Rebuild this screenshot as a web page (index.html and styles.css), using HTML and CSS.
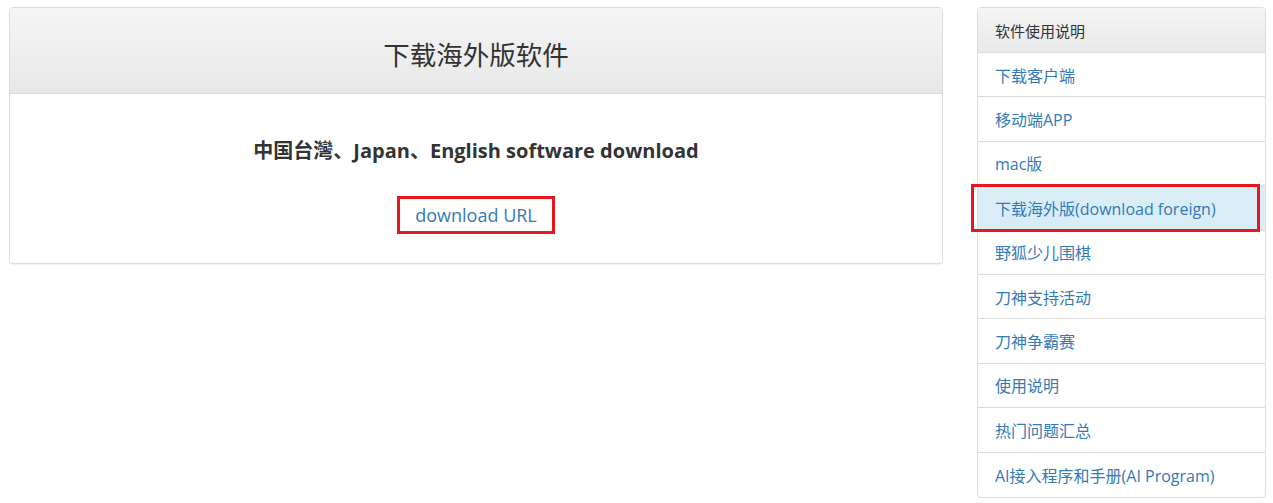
FILE: index.html
```html
<!DOCTYPE html>
<html lang="zh-CN">
<head>
<meta charset="utf-8">
<title>下载海外版软件</title>
<link rel="stylesheet" href="styles.css">
</head>
<body>
<div class="page">
  <div class="main panel">
    <div class="panel-heading main-heading">
      <h1 class="main-title">下载海外版软件</h1>
    </div>
    <div class="main-body">
      <p class="lead">中国台灣、Japan、English software download</p>
      <p class="link-row"><a class="dl-link" href="#">download URL</a></p>
    </div>
  </div>
  <div class="side panel">
    <div class="panel-heading side-heading">软件使用说明</div>
    <ul class="list">
      <li class="item"><a href="#">下载客户端</a></li>
      <li class="item"><a href="#">移动端APP</a></li>
      <li class="item"><a href="#">mac版</a></li>
      <li class="item active"><a href="#">下载海外版(download foreign)</a><span class="mark"></span></li>
      <li class="item"><a href="#">野狐少儿围棋</a></li>
      <li class="item"><a href="#">刀神支持活动</a></li>
      <li class="item"><a href="#">刀神争霸赛</a></li>
      <li class="item"><a href="#">使用说明</a></li>
      <li class="item"><a href="#">热门问题汇总</a></li>
      <li class="item"><a href="#">AI接入程序和手册(AI Program)</a></li>
    </ul>
  </div>
</div>
</body>
</html>
```
FILE: styles.css
```css
* { box-sizing: border-box; }
html, body { margin: 0; padding: 0; background: #fff; }
body {
  font-family: "Open Sans", "Noto Sans CJK SC", sans-serif;
  color: #333;
}
a { color: #337ab7; text-decoration: none; }
.page {
  display: flex;
  align-items: flex-start;
  padding: 7px 0 0 9px;
  gap: 34px;
}
.panel {
  flex-shrink: 0;
  border: 1px solid #ddd;
  border-radius: 4px;
  background: #fff;
  box-shadow: 0 1px 1px rgba(0,0,0,0.05);
}
.panel-heading {
  background: linear-gradient(to bottom, #f5f5f5 0%, #e8e8e8 100%);
  border-bottom: 1px solid #ddd;
  border-radius: 3px 3px 0 0;
}
.main { width: 934px; height: 257px; }
.main-heading {
  height: 86px;
  display: flex;
  align-items: center;
  justify-content: center;
}
.main-title {
  margin: 0;
  font-size: 26.5px;
  font-weight: normal;
  color: #333;
  line-height: 1;
  padding-top: 10px;
}
.main-body {
  text-align: center;
  padding-top: 44px;
}
.lead {
  margin: 0;
  font-size: 20px;
  font-weight: bold;
  line-height: 26px;
}
.link-row { margin: 32px 0 0; }
.dl-link {
  display: inline-block;
  font-size: 18px;
  line-height: 26px;
  padding: 3px 15px;
  border: 3px solid #e8161f;
}
.side { width: 289px; }
.side-heading {
  height: 45px;
  padding: 0 17px;
  display: flex;
  align-items: center;
  font-size: 15px;
}
.list { list-style: none; margin: 0; padding: 0; }
.item {
  position: relative;
  height: 44.4px;
  padding: 0 17px;
  display: flex;
  align-items: center;
  border-bottom: 1px solid #ddd;
  font-size: 16px;
}
.item:last-child { border-bottom: none; }
.item.active { background: #d9edf7; }
.mark {
  position: absolute;
  left: -7px;
  right: 5px;
  top: -2px;
  bottom: -2px;
  border: 3px solid #e8161f;
}
```
